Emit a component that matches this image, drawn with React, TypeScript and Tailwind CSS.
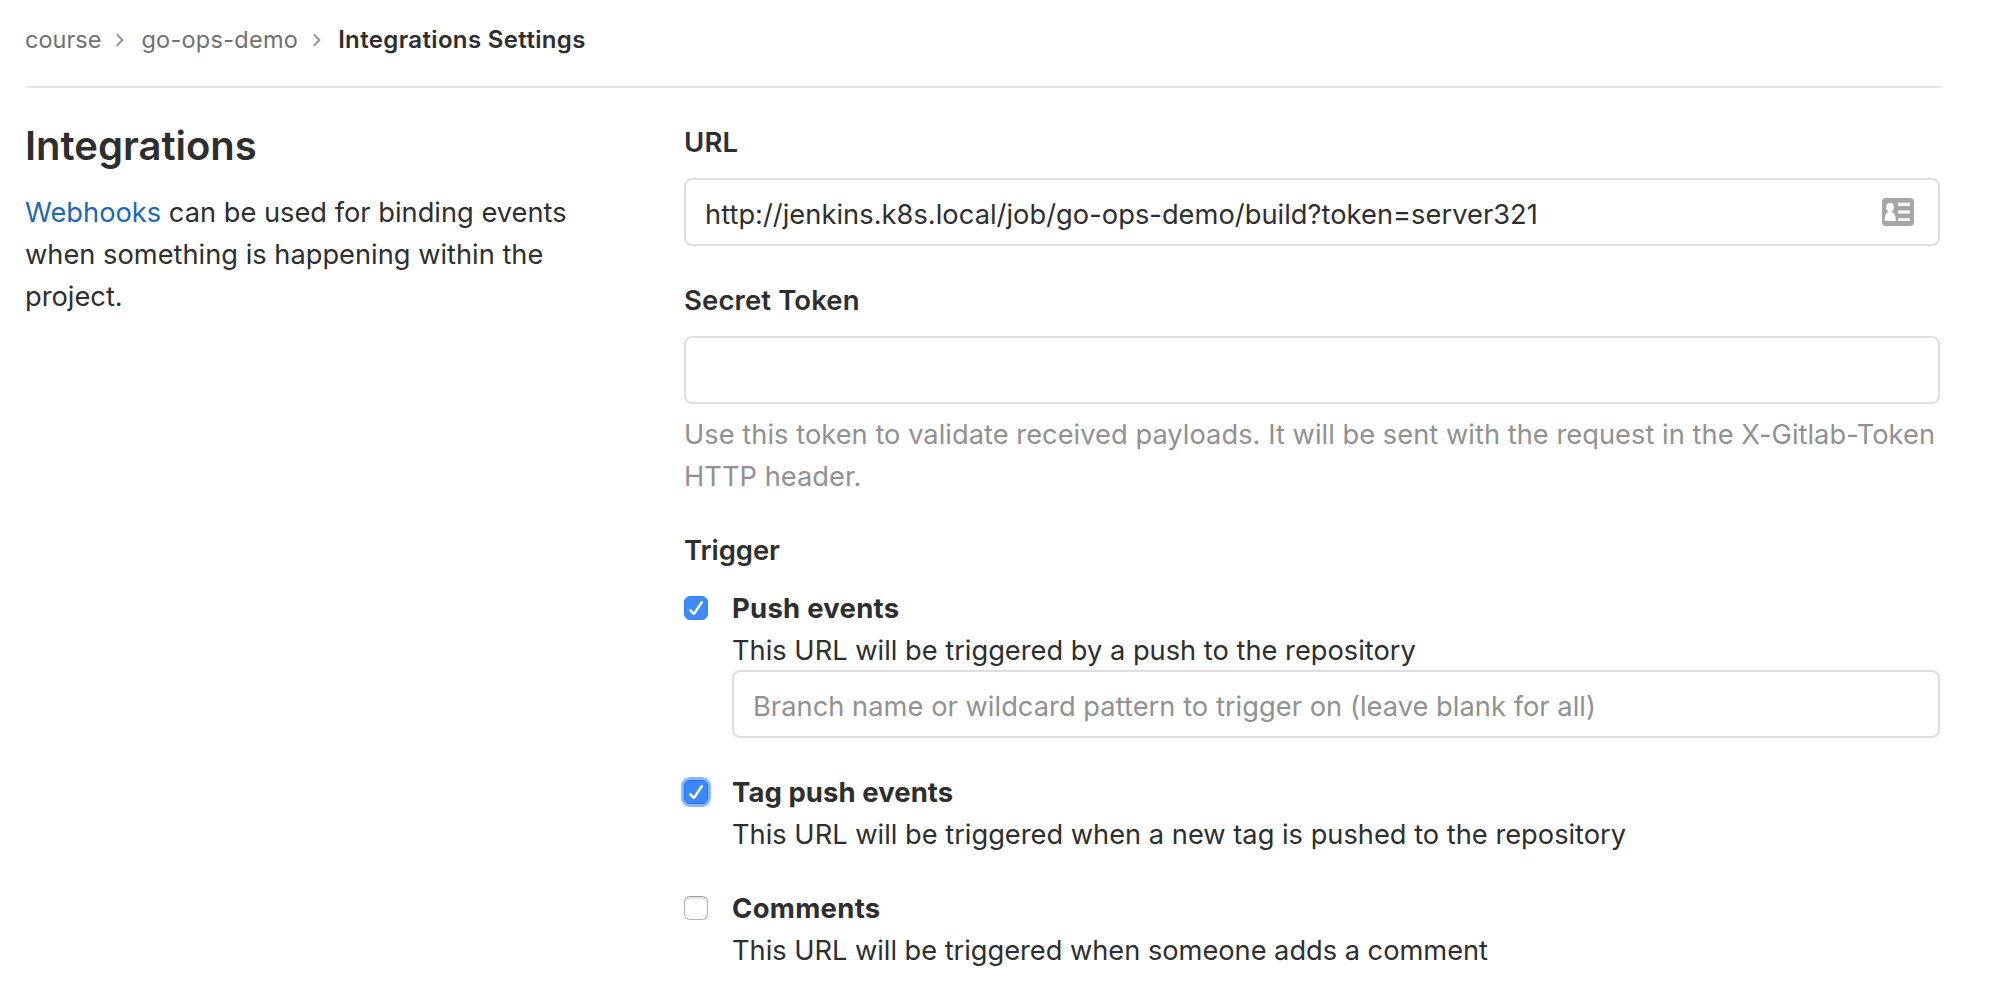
import React from 'react';

function Chevron({ className }: { className: string }) {
  return (
    <svg className={className} width="8" height="14" viewBox="0 0 8 14" fill="none">
      <path d="M1.4 1.8 6.4 7l-5 5.2" stroke="#919191" strokeWidth="1.9" strokeLinecap="round" strokeLinejoin="round" />
    </svg>
  );
}

function ContactCardIcon() {
  return (
    <svg width="32" height="28" viewBox="0 0 32 28">
      <rect width="32" height="28" rx="4" fill="#a6a6a6" />
      <ellipse cx="8" cy="9.3" rx="4" ry="4.6" fill="#fff" />
      <path d="M6.2 12h3.6v2.2c2.600.6 4 3 4 8.800H2.800c0-5.800 1-8.200 3.400-8.800z" fill="#fff" />
      <path d="M16 4.800h12v3.200H16zM16 12.600h12v3H16zM16 20.200h12v2.800H16z" fill="#fff" />
    </svg>
  );
}

function Checkbox({ checked = false, focused = false }: { checked?: boolean; focused?: boolean }) {
  if (!checked) {
    return (
      <span className="mt-[9px] block size-6 shrink-0 rounded-[6px] border border-[#b4b4b4] border-t-[#9a9a9a] bg-white shadow-[inset_0_2px_2px_rgba(0,0,0,0.12)]" />
    );
  }
  return (
    <span
      className={
        focused
          ? 'mt-[9px] block size-6 shrink-0 rounded-[6px] border border-[#1f74f5] bg-[#3b88fb] shadow-[0_0_0_3px_#8ab6fa]'
          : 'mt-[9px] block size-6 shrink-0 rounded-[6px] border border-[#3583f8] bg-[#3f8bfc]'
      }
    >
      <svg className="-m-px block" width="24" height="24" viewBox="0 0 24 24" fill="none" strokeLinecap="round" strokeLinejoin="round">
        <path d="m6.400 15.600 3.600 3.600 7.900-11.800" stroke="#1e62c8" strokeOpacity="0.35" strokeWidth="2.400" />
        <path d="m6.200 14.300 3.800 3.700 7.800-11.700" stroke="#fff" strokeWidth="2.500" />
      </svg>
    </span>
  );
}

const inputClass =
  'block h-[68px] w-full rounded-lg border-2 border-[#dfdfdf] bg-white px-[19px] pt-1 text-[27.25px] text-[#2e2e2e] outline-none placeholder:text-[#919191]';

export default function App() {
  return (
    <div className="h-[986px] w-[2014px] overflow-hidden bg-white pl-[26px] pr-[72px] font-[Inter,'Liberation_Sans',sans-serif] text-[27.25px] leading-[42px] text-[#2e2e2e]">
      <nav className="flex h-[88px] items-start border-b-2 border-[#e5e5e5] pt-[22px] text-[23.5px] leading-9 text-[#707070]">
        <a className="-ml-px">course</a>
        <Chevron className="mt-[11px] ml-[15px]" />
        <a className="ml-[17px] tracking-[0.27px]">go-ops-demo</a>
        <Chevron className="mt-[11px] ml-[15px]" />
        <span className="ml-[17px] text-2xl leading-9 font-semibold tracking-[0.35px] text-[#2e2e2e]">Integrations Settings</span>
      </nav>

      <div className="flex items-start">
        <section className="w-[658px] shrink-0 pt-[34px]">
          <h1 className="-ml-px text-[40px] leading-[48px] font-semibold">Integrations</h1>
          <p className="mt-[22px] -ml-px whitespace-nowrap">
            <a className="text-[#1b69b6]">Webhooks</a> can be used for binding events
            <br />
            when something is happening within the
            <br />
            project.
          </p>
        </section>

        <form className="w-[1256px] pt-[33px]">
          <label className="block text-[27.5px] font-semibold tracking-[0.2px]">URL</label>
          <div className="relative mt-[15px]">
            <input
              className={`${inputClass} tracking-[0.04px]`}
              defaultValue="http://jenkins.k8s.local/job/go-ops-demo/build?token=server321"
            />
            <span className="absolute top-5 right-[26px]">
              <ContactCardIcon />
            </span>
          </div>

          <label className="mt-[33px] block text-[27.5px] font-semibold tracking-[0.12px]">Secret Token</label>
          <input className={`${inputClass} mt-[15px]`} />
          <p className="mt-[10px] whitespace-nowrap tracking-[0.035px] text-[#919191]">
            Use this token to validate received payloads. It will be sent with the request in the X-Gitlab-Token
            <br />
            HTTP header.
          </p>

          <div className="mt-[31px] text-[27.5px] font-semibold tracking-[-0.1px]">Trigger</div>

          <div className="mt-4 flex gap-6">
            <Checkbox checked />
            <div className="flex-1">
              <div className="text-[27.5px] font-bold tracking-[0.25px]">Push events</div>
              <div className="h-[41px] pt-px">This URL will be triggered by a push to the repository</div>
              <input
                className={`${inputClass} tracking-[0.04px]`}
                placeholder="Branch name or wildcard pattern to trigger on (leave blank for all)"
              />
            </div>
          </div>

          <div className="mt-[33px] flex gap-6">
            <Checkbox checked focused />
            <div className="flex-1">
              <div className="text-[27.5px] font-bold tracking-[0.06px]">Tag push events</div>
              <div className="pt-px">This URL will be triggered when a new tag is pushed to the repository</div>
            </div>
          </div>

          <div className="mt-[31px] flex gap-6">
            <Checkbox />
            <div className="flex-1">
              <div className="text-[27.5px] font-bold tracking-[0.3px]">Comments</div>
              <div className="pt-px tracking-[-0.03px]">This URL will be triggered when someone adds a comment</div>
            </div>
          </div>
        </form>
      </div>
    </div>
  );
}
